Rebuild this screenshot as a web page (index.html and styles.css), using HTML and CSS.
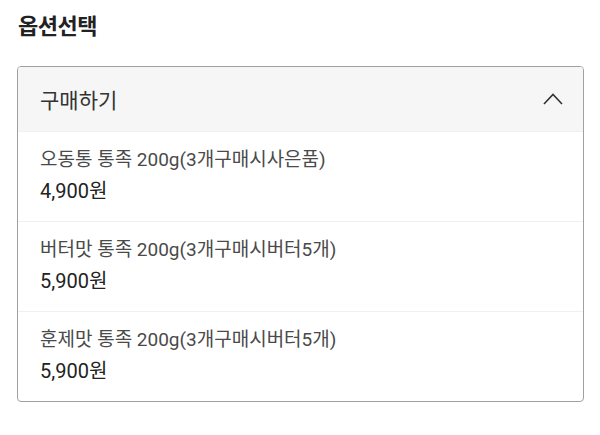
FILE: index.html
```html
<!DOCTYPE html>
<html lang="ko">
<head>
  <meta charset="UTF-8">
  <meta name="viewport" content="width=device-width, initial-scale=1.0">
  <title>옵션선택</title>
  <link rel="stylesheet" href="styles.css">
</head>
<body>

  <h2 class="titulo">옵션선택</h2>

  <div class="opciones">
    <div class="cabecera">
      <span>구매하기</span>
      <svg class="flecha" width="20" height="12" viewBox="0 0 20 12">
        <polyline points="1,11 10,1.5 19,11" fill="none" stroke="#333" stroke-width="1.6"/>
      </svg>
    </div>

    <div class="opcion">
      <p class="nombre">오동통 통족 200g(3개구매시사은품)</p>
      <p class="precio">4,900원</p>
    </div>
    <div class="opcion">
      <p class="nombre">버터맛 통족 200g(3개구매시버터5개)</p>
      <p class="precio">5,900원</p>
    </div>
    <div class="opcion">
      <p class="nombre">훈제맛 통족 200g(3개구매시버터5개)</p>
      <p class="precio">5,900원</p>
    </div>
  </div>

</body>
</html>
```

FILE: styles.css
```css
body {
  margin: 0;
  padding: 0 16px 0 17px;
  background-color: #fff;
  font-family: Roboto, "Noto Sans CJK KR", sans-serif;
  color: #222;
}

.titulo {
  margin: 0;
  padding: 12px 0 0 1px;
  height: 66px;
  box-sizing: border-box;
  font-size: 22px;
  font-weight: 700;
  line-height: 30px;
  letter-spacing: -0.5px;
}

.opciones {
  border: 1px solid #a0a0a0;
  border-radius: 4px;
  overflow: hidden;
}

.cabecera {
  display: flex;
  justify-content: space-between;
  align-items: center;
  height: 64px;
  padding: 0 20px 0 22px;
  background-color: #f6f6f6;
  font-size: 21px;
  color: #333;
}

.flecha {
  display: block;
}

.opcion {
  height: 90px;
  box-sizing: border-box;
  padding: 13px 22px 0;
  border-top: 1px solid #f0f0f0;
}

.opcion:first-of-type {
  border-top: none;
}

.nombre {
  margin: 0;
  font-size: 19px;
  line-height: 30px;
  color: #4a4a4a;
}

.precio {
  margin: 1px 0 0;
  font-size: 20px;
  line-height: 30px;
  color: #222;
}
```
